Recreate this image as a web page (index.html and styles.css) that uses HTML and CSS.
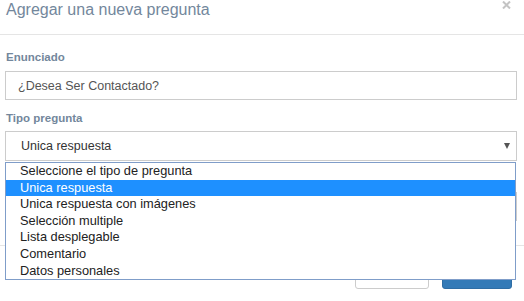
FILE: index.html
```html
<!DOCTYPE html>
<html lang="es">
<head>
    <meta charset="UTF-8">
    <title>Agregar una nueva pregunta</title>
    <link rel="stylesheet" href="styles.css">
</head>
<body>
    <div class="modal">
        <div class="modal-header">
            <h4 class="modal-title">Agregar una nueva pregunta</h4>
            <button class="close" type="button" aria-label="Cerrar">
                <svg width="9" height="8" viewBox="0 0 9 8"><path d="M1 0.5 L8 7.5 M8 0.5 L1 7.5" stroke="#c4c4c4" stroke-width="2"/></svg>
            </button>
        </div>

        <div class="modal-body">
            <div class="form-group">
                <label>Enunciado</label>
                <div class="form-control input">¿Desea Ser Contactado?</div>
            </div>
            <div class="form-group">
                <label>Tipo pregunta</label>
                <div class="form-control select">
                    <span>Unica respuesta</span>
                    <svg class="caret" width="6" height="6" viewBox="0 0 6 6"><polygon points="0,0 6,0 3,6" fill="#555"/></svg>
                </div>
            </div>
            <!-- covered by the open list -->
            <div class="form-group">
                <label></label>
                <div class="form-control input"></div>
            </div>

            <!-- open select list -->
            <ul class="dropdown">
                <li>Seleccione el tipo de pregunta</li>
                <li class="selected">Unica respuesta</li>
                <li>Unica respuesta con imágenes</li>
                <li>Selección multiple</li>
                <li>Lista desplegable</li>
                <li>Comentario</li>
                <li>Datos personales</li>
            </ul>
        </div>

        <div class="modal-footer">
            <button class="btn btn-default" type="button">Cancelar</button>
            <button class="btn btn-primary" type="button">Guardar</button>
        </div>
    </div>
</body>
</html>
```

FILE: styles.css
```css
body {
    margin: 0;
    font-family: "Liberation Sans", Arial, sans-serif;
    color: #73879C;
    background-color: #fff;
}
.modal {
    position: relative;
    width: 524px;
    height: 301px;
    overflow: hidden;
}
.modal-header {
    height: 35px;
    box-sizing: border-box;
    padding: 2px 13px 0 6px;
    border-bottom: 1px solid #e5e5e5;
    display: flex;
    justify-content: space-between;
    align-items: flex-start;
}
.modal-title {
    margin: 0;
    font-size: 16px;
    line-height: 16px;
    font-weight: normal;
    color: #73879C;
}
.close {
    background: none;
    border: none;
    padding: 0;
    margin-top: -1px;
    display: block;
    line-height: 0;
}
.modal-body {
    padding: 14px 7px 14px 5px;
}
.form-group {
    margin-bottom: 10px;
}
.form-group label {
    display: block;
    height: 16px;
    margin: 0 0 5px 1px;
    font-size: 11.5px;
    line-height: 16px;
    font-weight: bold;
    color: #73879C;
}
.form-group:first-child label {
    margin-bottom: 6px;
}
.form-control {
    box-sizing: border-box;
    border: 1px solid #ccc;
    background-color: #fff;
    font-size: 12.5px;
    display: flex;
    align-items: center;
    padding: 0 12px;
}
.input {
    height: 29px;
    color: #555;
}
.select {
    height: 30px;
    color: #333;
    padding: 0 6px 0 15px;
    justify-content: space-between;
}
.caret {
    display: block;
}
.dropdown {
    position: absolute;
    top: 162px;
    left: 5px;
    width: 511px;
    box-sizing: border-box;
    margin: 0;
    padding: 0;
    list-style: none;
    border: 1px solid #7f9dc9;
    background-color: #fff;
    z-index: 2;
}
.dropdown li {
    height: 16.6px;
    line-height: 16.6px;
    padding-left: 14px;
    font-size: 12.8px;
    color: #222;
    white-space: nowrap;
}
.dropdown li.selected {
    background-color: #1e90ff;
    color: #fff;
}
.modal-footer {
    border-top: 1px solid #e5e5e5;
    padding: 10px 12px 0 0;
    display: flex;
    justify-content: flex-end;
    gap: 13px;
}
.btn {
    height: 33px;
    box-sizing: border-box;
    border-radius: 3px;
    font-family: inherit;
    font-size: 12.5px;
    cursor: pointer;
}
.btn-default {
    width: 74px;
    background-color: #fff;
    border: 1px solid #ccc;
    color: #333;
}
.btn-primary {
    width: 70px;
    background-color: #337ab7;
    border: 1px solid #2e6da4;
    color: #fff;
}
```
